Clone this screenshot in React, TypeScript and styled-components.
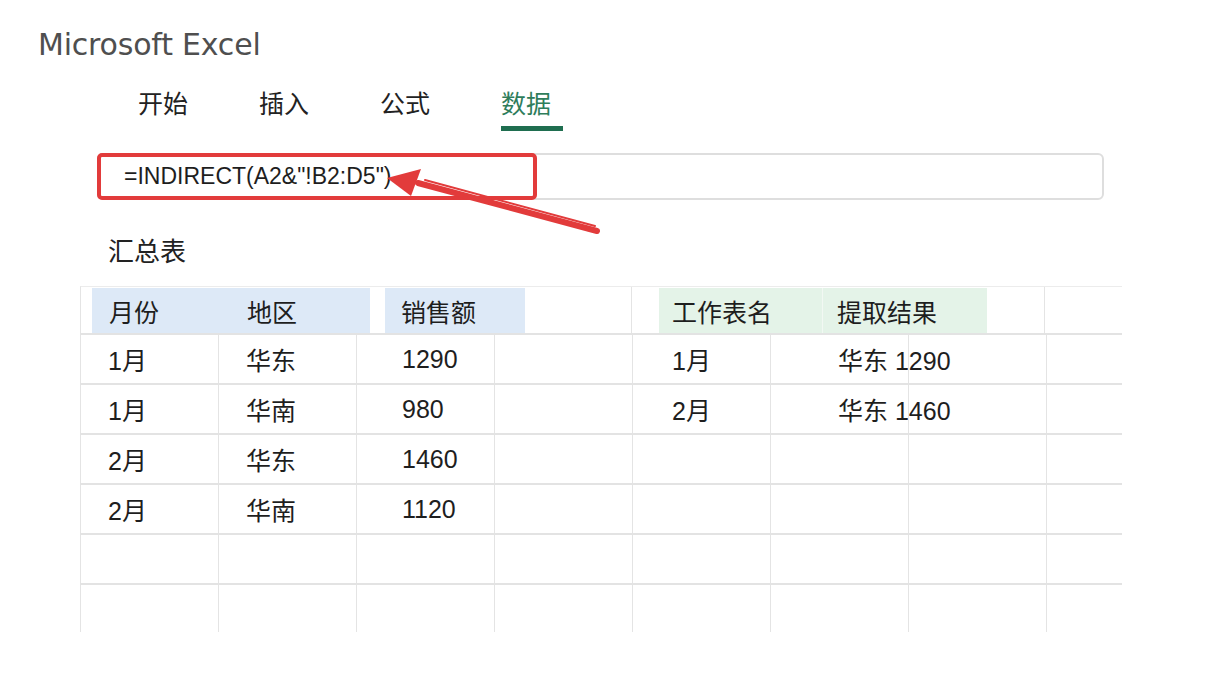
import React from 'react';
import { createGlobalStyle, styled } from 'styled-components';

const GlobalStyle = createGlobalStyle`
  html, body {
    margin: 0;
    padding: 0;
    background: #fff;
  }
  body {
    font-family: 'Liberation Sans', 'Noto Sans CJK SC', sans-serif;
    color: #222;
  }
`;

const Page = styled.div`
  position: relative;
  width: 1207px;
  height: 690px;
  overflow: hidden;
  background: #fff;
`;

const Title = styled.h1`
  margin: 27px 0 0 38px;
  font-family: 'DejaVu Sans', sans-serif;
  font-size: 30px;
  line-height: 36px;
  font-weight: 400;
  color: #4f4f4f;
  letter-spacing: -0.2px;
`;

const Tabs = styled.nav`
  display: flex;
  gap: 59px;
  margin: 27px 0 0 138px;
`;

const Tab = styled.div<{ $active?: boolean }>`
  padding: 0 12px 11px 0;
  font-family: 'Noto Sans CJK SC', sans-serif;
  font-size: 25px;
  line-height: 25px;
  color: ${({ $active }) => ($active ? '#2e7d5b' : '#222')};
  border-bottom: 5px solid ${({ $active }) => ($active ? '#1f6e50' : 'transparent')};
`;

const FormulaBar = styled.div`
  display: flex;
  width: 1003px;
  height: 43px;
  margin: 22px 0 0 97px;
  border: 2px solid #dedede;
  border-radius: 6px;
`;

const Highlight = styled.div`
  display: flex;
  align-items: center;
  width: 440px;
  margin: -2px 0 -2px -2px;
  padding-left: 23px;
  box-sizing: border-box;
  border: 4px solid #e23b3b;
  border-radius: 5px;
  font-size: 23px;
  color: #1e1e1e;
`;

const Caption = styled.div`
  margin: 37px 0 0 108px;
  font-family: 'Noto Sans CJK SC', sans-serif;
  font-size: 26px;
  line-height: 26px;
`;

const Sheet = styled.div`
  width: 1042px;
  margin: 23px 0 0 80px;
  font-family: 'Liberation Sans', 'Noto Sans CJK SC', sans-serif;
  font-size: 25px;
  color: #1e1e1e;
`;

const HeadRow = styled.div`
  display: flex;
  height: 49px;
  padding-top: 1px;
  box-sizing: border-box;
  border-top: 1px solid #ececec;
  border-bottom: 2px solid #e3e3e3;
  border-left: 1px solid #e4e4e4;
`;

const Fill = styled.div<{ $tone: 'blue' | 'green'; $start: number; $width: number }>`
  display: flex;
  align-items: center;
  margin-left: ${({ $start }) => $start}px;
  width: ${({ $width }) => $width}px;
  background: ${({ $tone }) => ($tone === 'blue' ? '#dde9f7' : '#e4f3e8')};
`;

const HeadLabel = styled.div<{ $width?: number; $pad: number; $divider?: boolean }>`
  width: ${({ $width }) => ($width ? `${$width}px` : 'auto')};
  flex: ${({ $width }) => ($width ? 'none' : '1')};
  height: 100%;
  display: flex;
  align-items: center;
  padding-left: ${({ $pad }) => $pad}px;
  box-sizing: border-box;
  white-space: nowrap;
  font-family: 'Noto Sans CJK SC', sans-serif;
  border-left: ${({ $divider }) => ($divider ? '1px solid #f2f8f3' : 'none')};
`;

const HeadLine = styled.div<{ $start: number }>`
  margin-left: ${({ $start }) => $start}px;
  width: 1px;
  background: #e4e4e4;
  margin-top: -1px;
`;

const Row = styled.div<{ $last?: boolean }>`
  display: grid;
  grid-template-columns: repeat(7, 138px) 76px;
  height: ${({ $last }) => ($last ? '47px' : '50px')};
  box-sizing: border-box;
  border-bottom: ${({ $last }) => ($last ? 'none' : '2px solid #e3e3e3')};
`;

const Cell = styled.div<{ $pad?: number }>`
  display: flex;
  align-items: center;
  padding-left: ${({ $pad }) => $pad ?? 27}px;
  border-left: 1px solid #e4e4e4;
  white-space: nowrap;
`;

const Arrow = styled.svg`
  position: absolute;
  left: 0;
  top: 0;
  pointer-events: none;
`;

type Line = [string, string, string];

const leftRows: Line[] = [
  ['1月', '华东', '1290'],
  ['1月', '华南', '980'],
  ['2月', '华东', '1460'],
  ['2月', '华南', '1120'],
];

const rightRows: [string, string][] = [
  ['1月', '华东 1290'],
  ['2月', '华东 1460'],
];

const App = () => {
  const rows = Array.from({ length: 6 }, (_, i) => {
    const left = leftRows[i] ?? ['', '', ''];
    const right = rightRows[i] ?? ['', ''];
    return (
      <Row key={i} $last={i === 5}>
        <Cell>{left[0]}</Cell>
        <Cell>{left[1]}</Cell>
        <Cell $pad={45}>{left[2]}</Cell>
        <Cell />
        <Cell $pad={39}>{right[0]}</Cell>
        <Cell $pad={67}>{right[1]}</Cell>
        <Cell />
        <Cell />
      </Row>
    );
  });

  return (
    <Page>
      <GlobalStyle />
      <Title>Microsoft Excel</Title>
      <Tabs>
        <Tab>开始</Tab>
        <Tab>插入</Tab>
        <Tab>公式</Tab>
        <Tab $active>数据</Tab>
      </Tabs>
      <FormulaBar>
        <Highlight>=INDIRECT(A2&amp;"!B2:D5")</Highlight>
      </FormulaBar>
      <Caption>汇总表</Caption>
      <Sheet>
        <HeadRow>
          <Fill $tone="blue" $start={11} $width={278}>
            <HeadLabel $width={155} $pad={17}>月份</HeadLabel>
            <HeadLabel $pad={0}>地区</HeadLabel>
          </Fill>
          <Fill $tone="blue" $start={15} $width={140}>
            <HeadLabel $pad={16}>销售额</HeadLabel>
          </Fill>
          <HeadLine $start={106} />
          <Fill $tone="green" $start={27} $width={328}>
            <HeadLabel $width={163} $pad={13}>工作表名</HeadLabel>
            <HeadLabel $pad={14} $divider>提取结果</HeadLabel>
          </Fill>
          <HeadLine $start={57} />
        </HeadRow>
        {rows}
      </Sheet>
      <Arrow width="1207" height="690" viewBox="0 0 1207 690">
        <path d="M597 231 L418 183" stroke="#e23b3b" strokeWidth="6" strokeLinecap="round" />
        <path d="M595 226 L425 180" stroke="#e23b3b" strokeWidth="2" strokeLinecap="round" />
        <polygon points="387,178 421,169 411,196" fill="#e23b3b" />
      </Arrow>
    </Page>
  );
};

export default App;
